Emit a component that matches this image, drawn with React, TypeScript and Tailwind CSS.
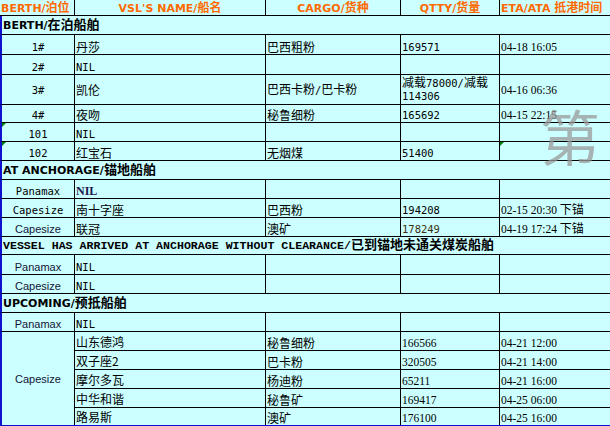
import React from "react";

const cn = "font-['Noto_Sans_CJK_SC',sans-serif] text-[12px]";
const mono = "font-['DejaVu_Sans_Mono','Liberation_Mono',monospace] text-[10.5px]";
const tm = "font-['Liberation_Serif',serif] text-[11.5px]";
const sans = "font-['Liberation_Sans',sans-serif] text-[11px] text-[#141438]";
const head = "font-['DejaVu_Sans',sans-serif] text-[11px] font-bold text-[#ff6a00]";
const headCn = "font-['Noto_Sans_CJK_SC',sans-serif] text-[12px] font-bold text-[#ff6a00]";
const sec = "font-['DejaVu_Sans',sans-serif] text-[11px] font-bold";
const secCn = "font-['Noto_Sans_CJK_SC',sans-serif] text-[13px] font-bold";

// split ascii / cjk runs so each gets its own font
function Mix({ text, a, c = cn }: { text: string; a: string; c?: string }) {
  const parts = text.match(/[\x00-\x7f]+|[^\x00-\x7f]+/g) ?? [];
  return (
    <span className="whitespace-pre">
      {parts.map((p, i) => (
        <span key={i} className={/^[\x00-\x7f]/.test(p) ? a : c}>
          {p}
        </span>
      ))}
    </span>
  );
}

function Mark() {
  return (
    <svg className="absolute left-0 top-0" width="4" height="4" viewBox="0 0 4 4">
      <polygon points="0,0 4,0 0,4" fill="#008000" />
    </svg>
  );
}

type RowProps = {
  h: string;
  b: React.ReactNode;
  n?: React.ReactNode;
  c?: React.ReactNode;
  q?: React.ReactNode;
  e?: React.ReactNode;
  mark?: boolean;
  etaMark?: boolean;
  mid?: boolean;
};

function Row({ h, b, n, c, q, e, mark, etaMark, mid }: RowProps) {
  const align = mid ? "items-center" : "items-end";
  return (
    <div
      className={`grid grid-cols-[73px_191px_135px_99px_1fr] border-b border-b-black border-l-2 border-l-[#1010d0] text-[12px] ${h}`}
    >
      <div className={`relative flex justify-center border-r border-black leading-[14px] whitespace-nowrap ${align}`}>
        {mark && <Mark />}
        {b}
      </div>
      <div className={`flex overflow-hidden border-r border-black pl-[1px] leading-[14px] whitespace-nowrap ${align}`}>{n}</div>
      <div className={`flex overflow-hidden border-r border-black pl-[1px] leading-[14px] whitespace-nowrap ${align}`}>{c}</div>
      <div className={`flex border-r border-black pl-[1px] leading-[14px] whitespace-nowrap ${align}`}>{q}</div>
      <div className={`relative flex overflow-hidden pl-[1px] leading-[14px] whitespace-nowrap ${align}`}>
        {etaMark && <Mark />}
        {e}
      </div>
    </div>
  );
}

function Section({ children, h = "h-[19px]" }: { children: React.ReactNode; h?: string }) {
  return (
    <div
      className={`flex items-end whitespace-nowrap border-b border-b-black border-l-2 border-l-[#1010d0] pl-[1px] text-[12px] leading-[16px] ${h}`}
    >
      {children}
    </div>
  );
}

const upcoming = [
  { n: "山东德鸿", c: "秘鲁细粉", q: "166566", e: "04-21 12:00" },
  { n: "双子座2", c: "巴卡粉", q: "320505", e: "04-21 14:00" },
  { n: "摩尔多瓦", c: "杨迪粉", q: "65211", e: "04-21 16:00" },
  { n: "中华和谐", c: "秘鲁矿", q: "169417", e: "04-25 06:00" },
  { n: "路易斯", c: "澳矿", q: "176100", e: "04-25 16:00" },
];

export default function App() {
  return (
    <div className="relative h-[426px] w-[610px] overflow-hidden bg-[#ccffff] text-black">
      {/* header */}
      <div className="grid h-[16px] grid-cols-[75px_191px_135px_99px_1fr] border-b border-black text-[11px] leading-[12px]">
        <div className="flex items-center border-r border-black pl-[1px] whitespace-nowrap">
          <Mix text="BERTH/泊位" a={head} c={headCn} />
        </div>
        <div className="flex items-center justify-center border-r border-black whitespace-nowrap">
          <Mix text="VSL'S NAME/船名" a={head} c={headCn} />
        </div>
        <div className="flex items-center justify-center border-r border-black whitespace-nowrap">
          <Mix text="CARGO/货种" a={head} c={headCn} />
        </div>
        <div className="flex items-center justify-center border-r border-black whitespace-nowrap">
          <Mix text="QTTY/货量" a={head} c={headCn} />
        </div>
        <div className="flex items-center pl-[1px] whitespace-nowrap">
          <Mix text="ETA/ATA 抵港时间" a={head} c={headCn} />
        </div>
      </div>

      <Section>
        <Mix text="BERTH/在泊船舶" a={sec} c={secCn} />
      </Section>
      <Row
        h="h-[20px]"
        b={<span className={mono}>1#</span>}
        n={<span className={cn}>丹莎</span>}
        c={<span className={cn}>巴西粗粉</span>}
        q={<span className={mono}>169571</span>}
        e={<span className={tm}>04-18 16:05</span>}
      />
      <Row h="h-[20px]" b={<span className={mono}>2#</span>} n={<span className={mono}>NIL</span>} />
      <Row
        h="h-[30px]"
        mid
        b={<span className={mono}>3#</span>}
        n={<span className={cn}>凯伦</span>}
        c={<Mix text="巴西卡粉/巴卡粉" a={mono} />}
        q={
          <div className="flex flex-col self-start leading-[13px]">
            <Mix text="减载78000/减载" a={mono} />
            <span className={`${mono} leading-[13px]`}>114306</span>
          </div>
        }
        e={<span className={tm}>04-16 06:36</span>}
      />
      <Row
        h="h-[18px]"
        b={<span className={mono}>4#</span>}
        n={<span className={cn}>夜吻</span>}
        c={<span className={cn}>秘鲁细粉</span>}
        q={<span className={mono}>165692</span>}
        e={<span className={tm}>04-15 22:15</span>}
      />
      <Row h="h-[19px]" mark b={<span className={mono}>101</span>} n={<span className={mono}>NIL</span>} />
      <Row
        h="h-[19px]"
        mark
        etaMark
        b={<span className={mono}>102</span>}
        n={<span className={cn}>红宝石</span>}
        c={<span className={cn}>无烟煤</span>}
        q={<span className={mono}>51400</span>}
      />

      <Section>
        <Mix text="AT ANCHORAGE/锚地船舶" a={sec} c={secCn} />
      </Section>
      <Row
        h="h-[19px]"
        b={<span className={mono}>Panamax</span>}
        n={<span className="font-['Liberation_Serif',serif] text-[12px] font-bold text-[#1a1a50]">NIL</span>}
      />
      <Row
        h="h-[19px]"
        b={<span className={mono}>Capesize</span>}
        n={<span className={cn}>南十字座</span>}
        c={<span className={cn}>巴西粉</span>}
        q={<span className={mono}>194208</span>}
        e={<Mix text="02-15 20:30 下锚" a={tm} />}
      />
      <Row
        h="h-[19px]"
        b={<span className={sans}>Capesize</span>}
        n={<span className={cn}>联冠</span>}
        c={<span className={cn}>澳矿</span>}
        q={<span className={`${mono} text-[#3a3010]`}>178249</span>}
        e={<Mix text="04-19 17:24 下锚" a={tm} />}
      />

      <Section h="h-[18px]">
        <Mix
          text="VESSEL HAS ARRIVED AT ANCHORAGE WITHOUT CLEARANCE/已到锚地未通关煤炭船舶"
          a="font-['Liberation_Mono',monospace] text-[11.6px] font-bold"
          c={secCn}
        />
      </Section>
      <Row h="h-[20px]" b={<span className={sans}>Panamax</span>} n={<span className={mono}>NIL</span>} />
      <Row h="h-[19px]" b={<span className={sans}>Capesize</span>} n={<span className={mono}>NIL</span>} />

      <Section>
        <Mix text="UPCOMING/预抵船舶" a={sec} c={secCn} />
      </Section>
      <Row h="h-[19px]" b={<span className={sans}>Panamax</span>} n={<span className={mono}>NIL</span>} />

      <div className="flex h-[94px] border-b border-b-[#1010d0] border-l-2 border-l-[#1010d0]">
        <div className="flex w-[73px] shrink-0 items-center justify-center border-r border-black pt-[2px]">
          <span className={sans}>Capesize</span>
        </div>
        <div className="flex flex-1 flex-col">
          {upcoming.map((r, i) => (
            <div
              key={i}
              className={`grid grid-cols-[191px_135px_99px_1fr] text-[12px] ${
                i < upcoming.length - 1 ? "h-[19px] border-b border-black" : "h-[17px]"
              }`}
            >
              <div className="flex items-end overflow-hidden border-r border-black pl-[1px] leading-[14px] whitespace-nowrap">
                <Mix text={r.n} a={cn} />
              </div>
              <div className="flex items-end overflow-hidden border-r border-black pl-[1px] leading-[14px] whitespace-nowrap">
                <span className={cn}>{r.c}</span>
              </div>
              <div className="flex items-end overflow-hidden border-r border-black pl-[1px] leading-[14px] whitespace-nowrap">
                <span className={tm}>{r.q}</span>
              </div>
              <div className="flex items-end overflow-hidden pl-[1px] leading-[14px] whitespace-nowrap">
                <span className={tm}>{r.e}</span>
              </div>
            </div>
          ))}
        </div>
      </div>

      {/* watermark glyph */}
      <span className="pointer-events-none absolute left-[540px] top-[105px] font-['Noto_Sans_CJK_SC',sans-serif] text-[60px] leading-none text-[#999999]/75">
        第
      </span>
    </div>
  );
}
